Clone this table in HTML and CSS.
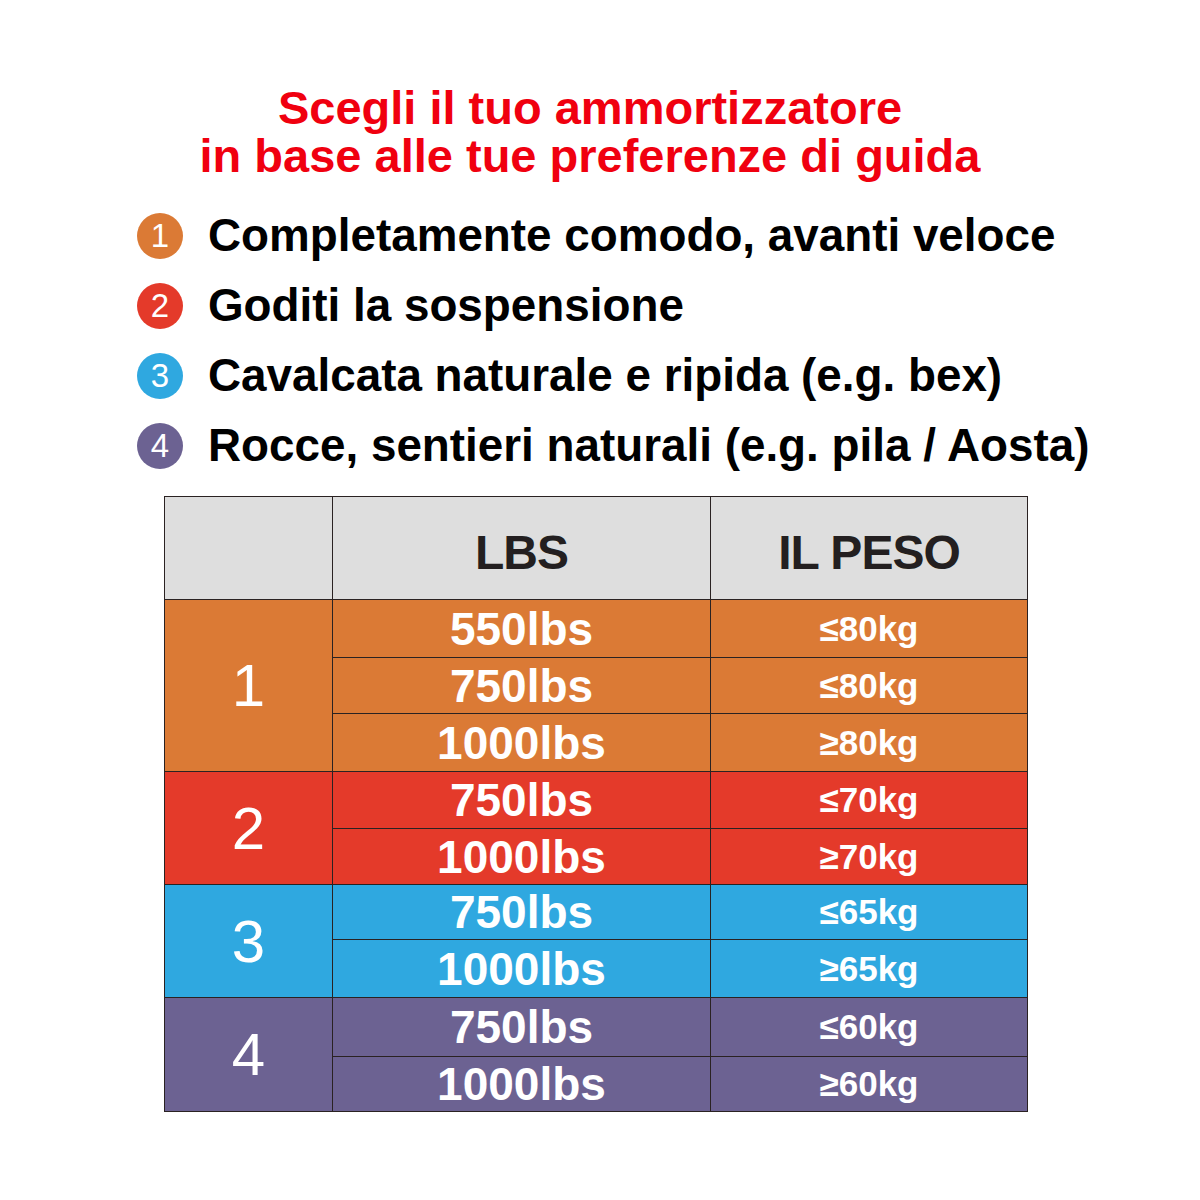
FILE: index.html
```html
<!DOCTYPE html>
<html lang="it">
<head>
<meta charset="utf-8">
<title>Scegli il tuo ammortizzatore</title>
<link rel="stylesheet" href="styles.css">
</head>
<body>
<main class="page">
  <h1 class="title">
    <span class="title-line">Scegli il tuo ammortizzatore</span>
    <span class="title-line">in base alle tue preferenze di guida</span>
  </h1>
  <ul class="prefs">
    <li class="pref"><span class="badge c1">1</span><span class="pref-text">Completamente comodo, avanti veloce</span></li>
    <li class="pref"><span class="badge c2">2</span><span class="pref-text">Goditi la sospensione</span></li>
    <li class="pref"><span class="badge c3">3</span><span class="pref-text">Cavalcata naturale e ripida (e.g. bex)</span></li>
    <li class="pref"><span class="badge c4">4</span><span class="pref-text">Rocce, sentieri naturali (e.g. pila / Aosta)</span></li>
  </ul>
  <table class="chart">
    <thead>
      <tr class="head">
        <th class="col-n"></th>
        <th class="col-lbs">LBS</th>
        <th class="col-kg">IL PESO</th>
      </tr>
    </thead>
    <tbody class="g1">
      <tr class="r58"><td class="num" rowspan="3">1</td><td class="lbs">550lbs</td><td class="kg">≤80kg</td></tr>
      <tr class="r56"><td class="lbs">750lbs</td><td class="kg">≤80kg</td></tr>
      <tr class="r58"><td class="lbs">1000lbs</td><td class="kg">≥80kg</td></tr>
    </tbody>
    <tbody class="g2">
      <tr class="r57"><td class="num" rowspan="2">2</td><td class="lbs">750lbs</td><td class="kg">≤70kg</td></tr>
      <tr class="r56"><td class="lbs">1000lbs</td><td class="kg">≥70kg</td></tr>
    </tbody>
    <tbody class="g3">
      <tr class="r54"><td class="num" rowspan="2">3</td><td class="lbs">750lbs</td><td class="kg">≤65kg</td></tr>
      <tr class="r58"><td class="lbs">1000lbs</td><td class="kg">≥65kg</td></tr>
    </tbody>
    <tbody class="g4">
      <tr class="r59"><td class="num" rowspan="2">4</td><td class="lbs">750lbs</td><td class="kg">≤60kg</td></tr>
      <tr class="r54"><td class="lbs">1000lbs</td><td class="kg">≥60kg</td></tr>
    </tbody>
  </table>
</main>
</body>
</html>
```

FILE: styles.css
```css
html, body {
  margin: 0;
  padding: 0;
  background: #ffffff;
}
.page {
  width: 1200px;
  height: 1200px;
  box-sizing: border-box;
  padding-top: 84px;
  display: flex;
  flex-direction: column;
  align-items: center;
  font-family: "Liberation Sans", Arial, sans-serif;
}
.title {
  margin: 0 0 0 -20px;
  display: flex;
  flex-direction: column;
  align-items: center;
  color: #f0000f;
  font-family: "Liberation Sans", Arial, sans-serif;
  font-weight: 700;
  font-size: 47px;
  line-height: 48px;
  letter-spacing: 0;
}
.title-line {
  display: block;
  white-space: nowrap;
}
.prefs {
  list-style: none;
  margin: 21px 0 0 137px;
  padding: 0;
  width: 940px;
  align-self: flex-start;
}
.pref {
  display: flex;
  align-items: center;
  height: 70px;
}
.badge {
  width: 46px;
  height: 46px;
  border-radius: 50%;
  color: #ffffff;
  font-size: 33px;
  line-height: 46px;
  text-align: center;
  flex: none;
  margin-right: 25px;
}
.c1 { background: #db7a35; }
.c2 { background: #e43a2a; }
.c3 { background: #2fa8e0; }
.c4 { background: #6c6292; }
.pref-text {
  color: #000000;
  font-weight: 700;
  font-size: 45.8px;
  white-space: nowrap;
}
.chart {
  margin-top: 15px;
  margin-left: -8px;
  border-collapse: collapse;
  width: 860px;
  table-layout: fixed;
}
.chart th, .chart td {
  border: 1.5px solid #2a2222;
  padding: 0;
  text-align: center;
  vertical-align: middle;
}
.col-n { width: 167px; }
.col-lbs { width: 377px; }
.col-kg { width: 316px; }
.head {
  height: 103px;
  background: #dedede;
}
.head th {
  color: #231f20;
  font-weight: 700;
  font-size: 48px;
  letter-spacing: -1px;
  padding-top: 8px;
}
.r54 { height: 54px; }
.r56 { height: 56px; }
.r57 { height: 57px; }
.r58 { height: 58px; }
.r59 { height: 59px; }
.g1 { background: #db7a35; }
.g2 { background: #e43a2a; }
.g3 { background: #2fa8e0; }
.g4 { background: #6c6292; }
.chart td { color: #ffffff; }
.num {
  font-size: 60px;
  font-weight: 400;
}
.lbs {
  font-weight: 700;
  font-size: 46px;
}
.kg {
  font-weight: 700;
  font-size: 35px;
}
```
